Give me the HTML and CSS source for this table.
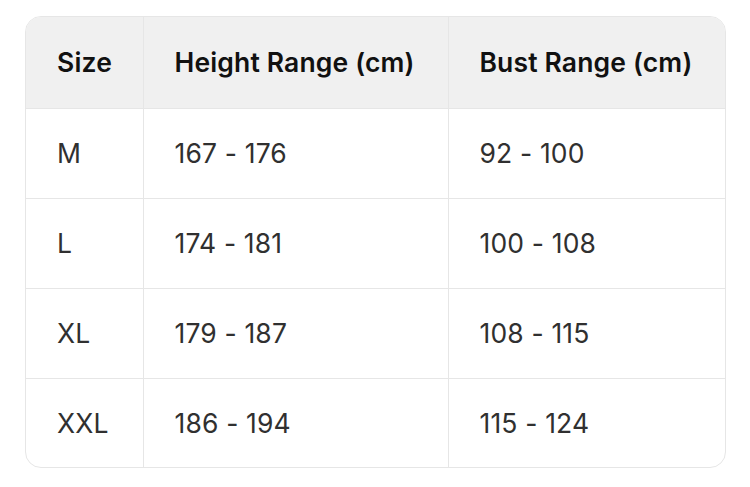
FILE: index.html
```html
<!DOCTYPE html>
<html>
<head>
<meta charset="utf-8">
<link rel="stylesheet" href="styles.css">
</head>
<body>
<div class="table-wrap">
  <table class="size-table">
    <colgroup>
      <col class="c1">
      <col class="c2">
      <col class="c3">
    </colgroup>
    <thead>
      <tr><th>Size</th><th>Height Range (cm)</th><th>Bust Range (cm)</th></tr>
    </thead>
    <tbody>
      <tr><td>M</td><td>167 - 176</td><td>92 - 100</td></tr>
      <tr><td>L</td><td>174 - 181</td><td>100 - 108</td></tr>
      <tr><td>XL</td><td>179 - 187</td><td>108 - 115</td></tr>
      <tr><td>XXL</td><td>186 - 194</td><td>115 - 124</td></tr>
    </tbody>
  </table>
</div>
</body>
</html>
```
FILE: styles.css
```css
html, body {
  margin: 0;
  padding: 0;
  background: #ffffff;
}
body {
  padding: 16px 0 0 25px;
  font-family: Inter, "Noto Sans", sans-serif;
}
.table-wrap {
  width: 699px;
  border: 1px solid #e6e6e6;
  border-radius: 16px;
  overflow: hidden;
}
.size-table {
  width: 699px;
  border-collapse: collapse;
  table-layout: fixed;
}
.c1 { width: 117px; }
.c2 { width: 305px; }
.c3 { width: 277px; }
.size-table th,
.size-table td {
  padding: 0 0 0 31px;
  text-align: left;
  letter-spacing: 0.15px;
  border-right: 1px solid #e6e6e6;
  border-bottom: 1px solid #e6e6e6;
  box-sizing: border-box;
}
.size-table th:last-child,
.size-table td:last-child {
  border-right: none;
}
.size-table tbody tr:last-child td {
  border-bottom: none;
}
.size-table th {
  height: 91px;
  background: #f0f0f0;
  font-size: 26.5px;
  font-weight: 600;
  color: #111111;
}
.size-table td {
  height: 90px;
  font-size: 26.5px;
  font-weight: 400;
  color: #303030;
}
.size-table tbody tr:last-child td {
  height: 89px;
}
```
